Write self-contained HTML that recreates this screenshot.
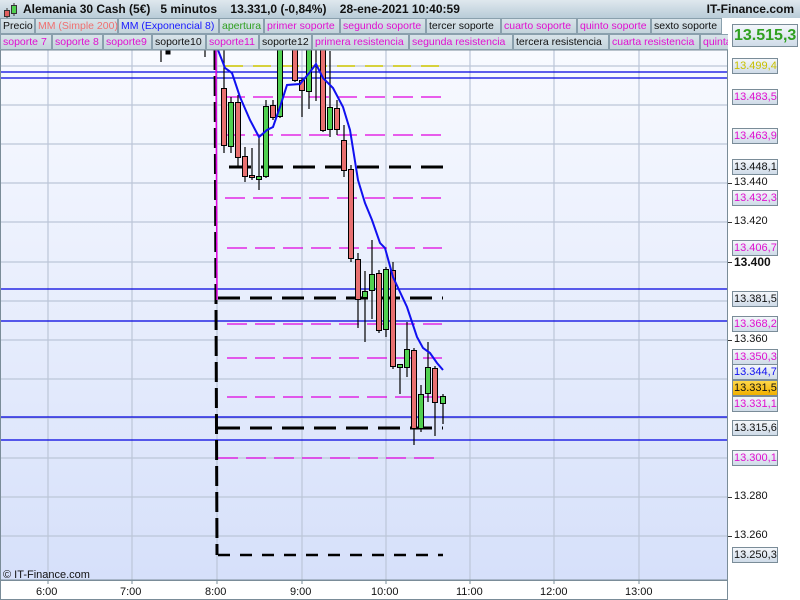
<!DOCTYPE html>
<html><head><meta charset="utf-8"><style>
*{margin:0;padding:0;box-sizing:border-box}
body{width:800px;height:600px;overflow:hidden;background:#fff;font-family:"Liberation Sans",sans-serif;position:relative}
#top{position:absolute;left:0;top:0;width:800px;height:18px;background:linear-gradient(#dfe8ee,#b9ccd8);font-weight:bold;font-size:12px;color:#111}
#top span{position:absolute;top:2px;white-space:nowrap}
.row{position:absolute;left:0;height:16px;width:728px;font-size:10.5px;overflow:hidden}
.row div{position:absolute;top:0;height:16px;border:1px solid #8aa0ad;background:linear-gradient(#d9e4ea,#c3d3dc);padding-left:2px;line-height:14px;white-space:nowrap;overflow:visible}
.m{color:#e010d0}.k{color:#111}
.lab{position:absolute;left:732px;width:46px;height:16px;border:1px solid #7a8c98;background:linear-gradient(#f4f7fb,#cfdbe8);font-size:11px;line-height:14px;padding-left:1px}
.pl{position:absolute;left:734px;font-size:11px;color:#111}
.tk{position:absolute;left:728px;width:4px;height:1px;background:#333}
.tl{position:absolute;top:586px;font-size:11px;color:#111}
</style></head><body>
<div id="top">
<svg style="position:absolute;left:3px;top:2px" width="16" height="16"><line x1="4" y1="6" x2="4" y2="16" stroke="#333"/><rect x="1.5" y="8.5" width="5" height="6" fill="#e06060" stroke="#333"/><line x1="11" y1="1" x2="11" y2="14" stroke="#333"/><rect x="8.5" y="3.5" width="5" height="8" fill="#50d050" stroke="#333"/></svg>
<span style="left:23px">Alemania 30 Cash (5€)&nbsp;&nbsp; 5 minutos&nbsp;&nbsp;&nbsp; 13.331,0 (-0,84%)&nbsp;&nbsp;&nbsp; 28-ene-2021 10:40:59</span>
<span style="right:6px">IT-Finance.com</span>
</div>
<div class="row" style="top:18px">
<div class="k" style="left:0;width:35px">Precio</div>
<div style="left:35px;width:83px;color:#f07070">MM (Simple 200)</div>
<div style="left:118px;width:101px;color:#1a1aff">MM (Exponencial 8)</div>
<div style="left:219px;width:45px;color:#30a020">apertura</div>
<div class="m" style="left:264px;width:76px">primer soporte</div>
<div class="m" style="left:340px;width:86px">segundo soporte</div>
<div class="k" style="left:426px;width:75px">tercer soporte</div>
<div class="m" style="left:501px;width:76px">cuarto soporte</div>
<div class="m" style="left:577px;width:74px">quinto soporte</div>
<div class="k" style="left:651px;width:71px">sexto soporte</div>
</div>
<div class="row" style="top:34px">
<div class="m" style="left:0;width:52px">soporte 7</div>
<div class="m" style="left:52px;width:51px">soporte 8</div>
<div class="m" style="left:103px;width:49px">soporte9</div>
<div class="k" style="left:152px;width:54px">soporte10</div>
<div class="m" style="left:206px;width:53px">soporte11</div>
<div class="k" style="left:259px;width:53px">soporte12</div>
<div class="m" style="left:312px;width:97px">primera resistencia</div>
<div class="m" style="left:409px;width:104px">segunda resistencia</div>
<div class="k" style="left:513px;width:96px">tercera resistencia</div>
<div class="m" style="left:609px;width:91px">cuarta resistencia</div>
<div class="m" style="left:700px;width:40px">quinta</div>
</div>
<svg style="position:absolute;left:0;top:50px" width="800" height="550" viewBox="0 50 800 550">
<defs><linearGradient id="bg" x1="0" y1="0" x2="0" y2="1"><stop offset="0" stop-color="#f8faff"/><stop offset="1" stop-color="#d6e0fa"/></linearGradient>
<clipPath id="c"><rect x="0" y="50" width="727" height="530"/></clipPath></defs>
<rect x="0" y="50" width="727" height="530" fill="url(#bg)"/>
<g stroke="#bcc6d8" stroke-width="1.2">
<line x1="0" y1="66" x2="727" y2="66"/><line x1="0" y1="105" x2="727" y2="105"/><line x1="0" y1="144" x2="727" y2="144"/><line x1="0" y1="183" x2="727" y2="183"/><line x1="0" y1="222" x2="727" y2="222"/><line x1="0" y1="262" x2="727" y2="262"/><line x1="0" y1="301" x2="727" y2="301"/><line x1="0" y1="340" x2="727" y2="340"/><line x1="0" y1="379" x2="727" y2="379"/><line x1="0" y1="418" x2="727" y2="418"/><line x1="0" y1="458" x2="727" y2="458"/><line x1="0" y1="497" x2="727" y2="497"/><line x1="0" y1="536" x2="727" y2="536"/>
<line x1="48" y1="50" x2="48" y2="580"/><line x1="132" y1="50" x2="132" y2="580"/><line x1="217" y1="50" x2="217" y2="580"/><line x1="302" y1="50" x2="302" y2="580"/><line x1="386" y1="50" x2="386" y2="580"/><line x1="470" y1="50" x2="470" y2="580"/><line x1="554" y1="50" x2="554" y2="580"/><line x1="639" y1="50" x2="639" y2="580"/>
</g>
<g clip-path="url(#c)">
<g stroke="#0000e0" stroke-width="1.3"><line x1="0" y1="72" x2="727" y2="72"/><line x1="0" y1="78" x2="727" y2="78"/><line x1="0" y1="289" x2="727" y2="289"/><line x1="0" y1="321" x2="727" y2="321"/><line x1="0" y1="417" x2="727" y2="417"/><line x1="0" y1="440" x2="727" y2="440"/></g>
<line x1="225" y1="66" x2="440" y2="66" stroke="#d0c800" stroke-width="1.5" stroke-dasharray="18 10"/>
<g stroke="#e000e0" stroke-width="1.2" stroke-dasharray="20 8"><line x1="225" y1="97" x2="442" y2="97"/><line x1="225" y1="135" x2="442" y2="135"/><line x1="225" y1="198" x2="442" y2="198"/><line x1="227" y1="248" x2="442" y2="248"/><line x1="227" y1="324" x2="442" y2="324"/><line x1="227" y1="358" x2="442" y2="358"/><line x1="227" y1="397" x2="442" y2="397"/><line x1="218" y1="458" x2="442" y2="458"/></g>
<g stroke="#000" stroke-width="3" stroke-dasharray="22 10"><line x1="229" y1="167" x2="443" y2="167"/><line x1="218" y1="298" x2="443" y2="298"/><line x1="218" y1="428" x2="443" y2="428"/><line x1="218" y1="555" x2="443" y2="555" stroke-width="2.5" stroke-dasharray="12 10"/></g>
<line x1="215" y1="50" x2="217" y2="555" stroke="#000" stroke-width="3" stroke-dasharray="20 6"/>
<line x1="216" y1="50" x2="217" y2="300" stroke="#e000e0" stroke-width="1.5"/>
<g stroke="#000" stroke-width="1.2">
<line x1="161" y1="50" x2="161" y2="62"/><line x1="205" y1="50" x2="205" y2="57"/>
<line x1="224" y1="50" x2="224" y2="153"/><line x1="231" y1="97" x2="231" y2="153"/><line x1="238" y1="95" x2="238" y2="167"/><line x1="245" y1="147" x2="245" y2="182"/><line x1="252" y1="148" x2="252" y2="180"/><line x1="259" y1="137" x2="259" y2="190"/><line x1="266" y1="100" x2="266" y2="178"/><line x1="273" y1="100" x2="273" y2="120"/><line x1="280" y1="50" x2="280" y2="118"/><line x1="295" y1="50" x2="295" y2="82"/><line x1="302" y1="78" x2="302" y2="117"/><line x1="309" y1="50" x2="309" y2="109"/><line x1="316" y1="50" x2="316" y2="101"/><line x1="323" y1="50" x2="323" y2="132"/><line x1="330" y1="51" x2="330" y2="137"/><line x1="337" y1="100" x2="337" y2="135"/><line x1="344" y1="125" x2="344" y2="177"/><line x1="351" y1="165" x2="351" y2="262"/><line x1="358" y1="253" x2="358" y2="328"/><line x1="365" y1="271" x2="365" y2="342"/><line x1="372" y1="240" x2="372" y2="319"/><line x1="379" y1="270" x2="379" y2="333"/><line x1="386" y1="267" x2="386" y2="337"/><line x1="393" y1="262" x2="393" y2="369"/><line x1="400" y1="364" x2="400" y2="394"/><line x1="407" y1="322" x2="407" y2="377"/><line x1="414" y1="348" x2="414" y2="445"/><line x1="421" y1="385" x2="421" y2="432"/><line x1="428" y1="342" x2="428" y2="402"/><line x1="435" y1="366" x2="435" y2="436"/><line x1="443" y1="394" x2="443" y2="424"/>
</g>
<g stroke="#000" stroke-width="1">
<rect x="166" y="50" width="4" height="4" fill="#000"/>
<rect x="221.5" y="88.5" width="5" height="57" fill="#e87070"/>
<rect x="228.5" y="102.5" width="5" height="44" fill="#50d050"/>
<rect x="235.5" y="102.5" width="5" height="55" fill="#e87070"/>
<rect x="242.5" y="156.5" width="5" height="20" fill="#e87070"/>
<rect x="249.5" y="175.5" width="5" height="2" fill="#e87070"/>
<rect x="256.5" y="176.5" width="5" height="3" fill="#50d050"/>
<rect x="263.5" y="106.5" width="5" height="70" fill="#50d050"/>
<rect x="270.5" y="105.5" width="5" height="12" fill="#e87070"/>
<rect x="277.5" y="45.5" width="5" height="71" fill="#50d050"/>
<rect x="292.5" y="45.5" width="5" height="35" fill="#e87070"/>
<rect x="299.5" y="80.5" width="5" height="10" fill="#e87070"/>
<rect x="306.5" y="45.5" width="5" height="46" fill="#50d050"/>
<rect x="320.5" y="45.5" width="5" height="85" fill="#e87070"/>
<rect x="327.5" y="107.5" width="5" height="22" fill="#50d050"/>
<rect x="334.5" y="108.5" width="5" height="21" fill="#e87070"/>
<rect x="341.5" y="140.5" width="5" height="30" fill="#e87070"/>
<rect x="348.5" y="169.5" width="5" height="89" fill="#e87070"/>
<rect x="355.5" y="259.5" width="5" height="40" fill="#e87070"/>
<rect x="362.5" y="291.5" width="5" height="6" fill="#50d050"/>
<rect x="369.5" y="274.5" width="5" height="16" fill="#50d050"/>
<rect x="376.5" y="273.5" width="5" height="57" fill="#e87070"/>
<rect x="383.5" y="269.5" width="5" height="60" fill="#50d050"/>
<rect x="390.5" y="270.5" width="5" height="96" fill="#e87070"/>
<rect x="397.5" y="364.5" width="5" height="3" fill="#50d050"/>
<rect x="404.5" y="349.5" width="5" height="18" fill="#50d050"/>
<rect x="411.5" y="350.5" width="5" height="78" fill="#e87070"/>
<rect x="418.5" y="394.5" width="5" height="34" fill="#50d050"/>
<rect x="425.5" y="367.5" width="5" height="26" fill="#50d050"/>
<rect x="432.5" y="368.5" width="5" height="34" fill="#e87070"/>
<rect x="440.5" y="396.5" width="5" height="7" fill="#50d050"/>
</g>
<polyline fill="none" stroke="#1010f0" stroke-width="2" points="218,50 225,68 232,73 240,97 250,120 259,137 267,130 273,127 280,107 287,85 300,84 310,72 316,64 323,78 333,88 343,107 350,130 358,180 365,203 372,220 380,243 385,248 393,277 407,307 417,337 423,348 430,353 437,363 443,370"/>
</g>
<rect x="0.5" y="50" width="727" height="530" fill="none" stroke="#7a8c98"/>
<rect x="0.5" y="580.5" width="727" height="19" fill="none" stroke="#7a8c98"/>
<g stroke="#7a8c98"><line x1="48" y1="580" x2="48" y2="584"/><line x1="132" y1="580" x2="132" y2="584"/><line x1="217" y1="580" x2="217" y2="584"/><line x1="302" y1="580" x2="302" y2="584"/><line x1="386" y1="580" x2="386" y2="584"/><line x1="470" y1="580" x2="470" y2="584"/><line x1="554" y1="580" x2="554" y2="584"/><line x1="639" y1="580" x2="639" y2="584"/></g>
<text x="3" y="578" font-size="11" font-family="Liberation Sans" fill="#111">© IT-Finance.com</text>
</svg>
<div class="tl" style="left:36px">6:00</div><div class="tl" style="left:120px">7:00</div><div class="tl" style="left:205px">8:00</div><div class="tl" style="left:290px">9:00</div><div class="tl" style="left:371px">10:00</div><div class="tl" style="left:456px">11:00</div><div class="tl" style="left:540px">12:00</div><div class="tl" style="left:625px">13:00</div>
<div class="tk" style="top:183px"></div><div class="pl" style="top:176px">13.440</div>
<div class="tk" style="top:222px"></div><div class="pl" style="top:215px">13.420</div>
<div class="tk" style="top:262px"></div><div class="pl" style="top:255px;font-weight:bold;font-size:12px">13.400</div>
<div class="tk" style="top:340px"></div><div class="pl" style="top:333px">13.360</div>
<div class="tk" style="top:497px"></div><div class="pl" style="top:490px">13.280</div>
<div class="tk" style="top:536px"></div><div class="pl" style="top:529px">13.260</div>
<div class="lab" style="top:58px;color:#c8c000">13.499,4</div>
<div class="lab" style="top:89px;color:#e010d0">13.483,5</div>
<div class="lab" style="top:128px;color:#e010d0">13.463,9</div>
<div class="lab" style="top:159px;color:#111">13.448,1</div>
<div class="lab" style="top:190px;color:#e010d0">13.432,3</div>
<div class="lab" style="top:240px;color:#e010d0">13.406,7</div>
<div class="lab" style="top:291px;color:#111">13.381,5</div>
<div class="lab" style="top:316px;color:#e010d0">13.368,2</div>
<div class="lab" style="top:349px;color:#e010d0">13.350,3</div>
<div class="lab" style="top:364px;color:#1010f0">13.344,7</div>
<div class="lab" style="top:380px;color:#111;background:linear-gradient(#ffd84a,#f0b000)">13.331,5</div>
<div class="lab" style="top:396px;color:#e010d0">13.331,1</div>
<div class="lab" style="top:420px;color:#111">13.315,6</div>
<div class="lab" style="top:450px;color:#e010d0">13.300,1</div>
<div class="lab" style="top:547px;color:#111">13.250,3</div>
<div class="lab" style="top:24px;left:732px;width:66px;height:23px;font-size:16px;line-height:21px;font-weight:bold;color:#30a020">13.515,3</div>
</body></html>
